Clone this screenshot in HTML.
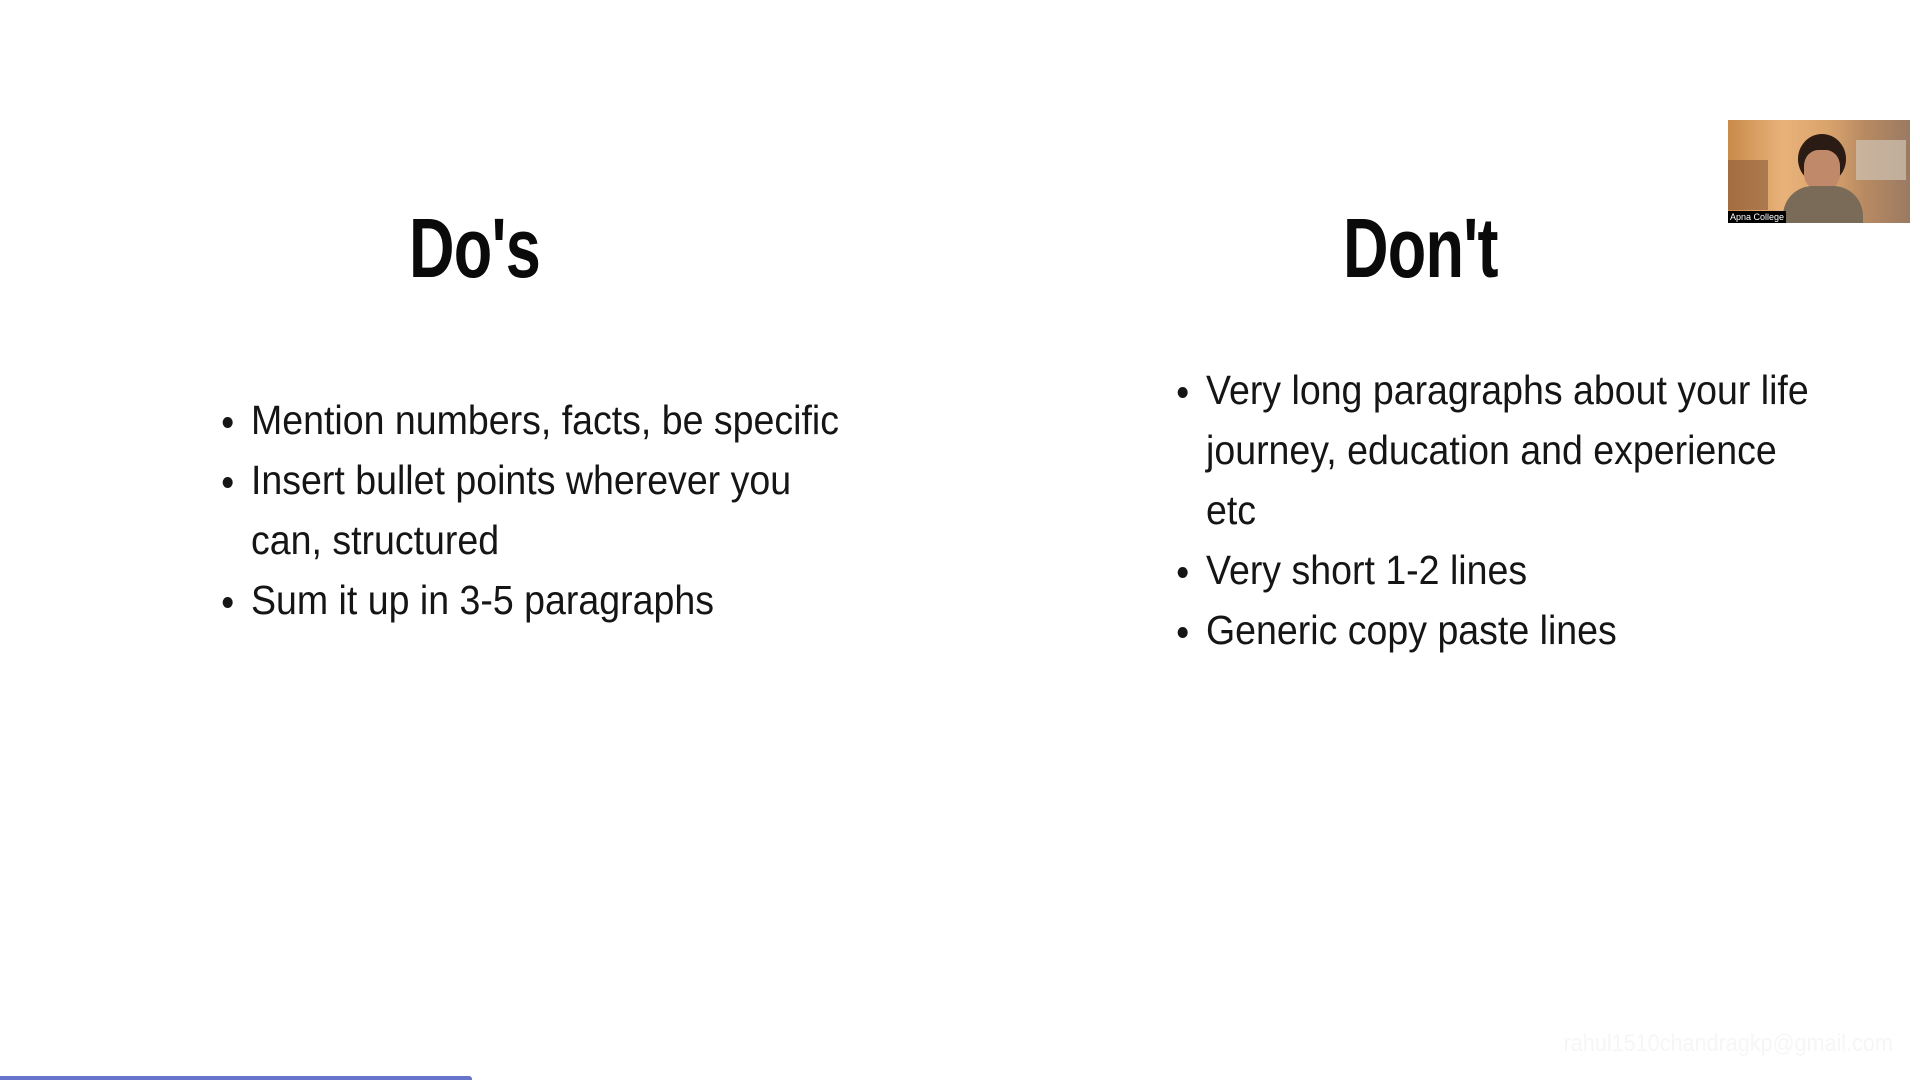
<!DOCTYPE html>
<html><head><meta charset="utf-8"><style>
html,body{margin:0;padding:0;background:#fff;}
body{width:1920px;height:1080px;position:relative;overflow:hidden;font-family:"Liberation Sans",sans-serif;color:#111;}
.t{position:absolute;font-weight:bold;font-size:84px;line-height:84px;top:206px;color:#0a0a0a;letter-spacing:-1px;transform:scaleX(0.75);transform-origin:left top;}
.list{position:absolute;font-size:41px;line-height:60px;color:#151515;transform:scaleX(0.915);transform-origin:left top;}
.list div{position:relative;white-space:nowrap;}
.b{position:absolute;left:-31px;top:27px;width:11px;height:11px;border-radius:50%;background:#151515;}
.cam{position:absolute;left:1728px;top:120px;width:182px;height:103px;background:linear-gradient(90deg,#c98a4a 0%,#e8b27a 30%,#d9a36c 55%,#b88a62 75%,#9a7a62 100%);overflow:hidden;}
.lab{position:absolute;left:0;bottom:0;background:#000;color:#fff;font-size:9px;padding:1px 2px;}
</style></head><body>
<div class="t" style="left:409px;">Do's</div>
<div class="t" style="left:1343px;">Don't</div>

<div class="list" style="left:251px;top:390px;">
<div><span class="b"></span>Mention numbers, facts, be specific</div>
<div><span class="b"></span>Insert bullet points wherever you</div>
<div>can, structured</div>
<div><span class="b"></span>Sum it up in 3-5 paragraphs</div>
</div>

<div class="list" style="left:1206px;top:360px;">
<div><span class="b"></span>Very long paragraphs about your life</div>
<div>journey, education and experience</div>
<div>etc</div>
<div><span class="b"></span>Very short 1-2 lines</div>
<div><span class="b"></span>Generic copy paste lines</div>
</div>

<div class="cam">
<div style="position:absolute;left:70px;top:14px;width:48px;height:50px;border-radius:50%;background:#2a1c14;"></div>
<div style="position:absolute;left:76px;top:30px;width:36px;height:40px;border-radius:40%;background:#c08a6a;"></div>
<div style="position:absolute;left:55px;top:66px;width:80px;height:40px;border-radius:30px 30px 0 0;background:#7a6a58;"></div>
<div style="position:absolute;left:128px;top:20px;width:50px;height:40px;background:#cfc3b4;opacity:.7;"></div>
<div style="position:absolute;left:0;top:40px;width:40px;height:50px;background:#8a5a3a;opacity:.6;"></div>
<div class="lab">Apna College</div>
</div>

<div style="position:absolute;right:27px;top:1030px;font-size:24px;color:#f6f6f6;transform:scaleX(0.9);transform-origin:right top;">rahul1510chandragkp@gmail.com</div>
<div style="position:absolute;left:0;top:1076px;width:472px;height:4px;background:#6674cc;border-radius:0 3px 0 0;"></div>
</body></html>
